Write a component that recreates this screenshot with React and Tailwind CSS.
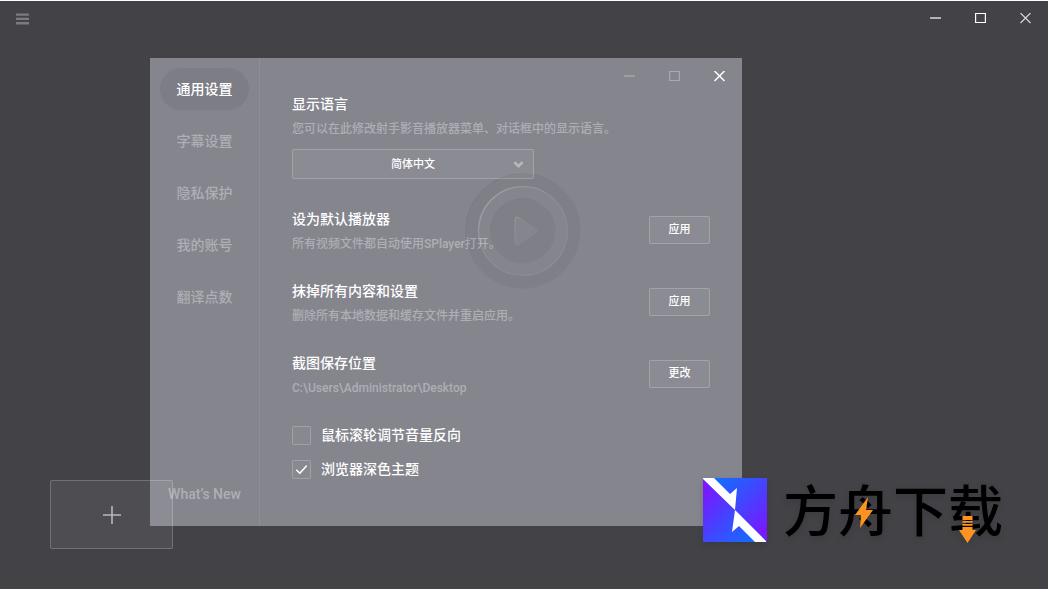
import React, { useState } from "react";

const tabs = ["通用设置", "字幕设置", "隐私保护", "我的账号", "翻译点数"];

const languages = ["简体中文", "繁體中文", "English", "日本語"];

const actions = [
  {
    title: "设为默认播放器",
    text: "所有视频文件都自动使用SPlayer打开。",
    button: "应用",
  },
  {
    title: "抹掉所有内容和设置",
    text: "删除所有本地数据和缓存文件并重启应用。",
    button: "应用",
  },
  {
    title: "截图保存位置",
    text: "C:\\Users\\Administrator\\Desktop",
    button: "更改",
  },
];

const WindowControls = ({ dimmed }) => (
  <div className="flex h-full">
    <button
      aria-label="Minimize"
      className={`flex w-[45px] items-center justify-center ${
        dimmed ? "text-white/20" : "text-white/60"
      }`}
    >
      <svg width="11" height="11" viewBox="0 0 11 11">
        <path d="M0 4h11v2H0z" fill="currentColor" />
      </svg>
    </button>
    <button
      aria-label="Maximize"
      className={`flex w-[45px] items-center justify-center ${
        dimmed ? "text-white/30" : "text-white"
      }`}
    >
      <svg width="11" height="11" viewBox="0 0 11 11">
        <path
          d="M.6.5h9.8v9H.6z"
          fill="none"
          stroke="currentColor"
          strokeWidth="1.2"
        />
      </svg>
    </button>
    <button
      aria-label="Close"
      className={`flex w-[45px] items-center justify-center ${
        dimmed ? "text-white" : "text-white/80"
      }`}
    >
      <svg width="11" height="11" viewBox="0 0 11 11">
        <path
          d="M.5 0l10 10M10.5 0l-10 10"
          stroke="currentColor"
          strokeWidth={dimmed ? 1.5 : 1.1}
        />
      </svg>
    </button>
  </div>
);

const CheckOption = ({ label, checked, onChange }) => (
  <label className="flex items-center gap-2.5 text-sm leading-5 font-medium text-white">
    <span className="relative flex">
      <input
        type="checkbox"
        checked={checked}
        onChange={onChange}
        className="size-[19px] appearance-none rounded-xs border border-white/20 bg-white/3"
      />
      {checked && (
        <svg
          className="pointer-events-none absolute inset-0"
          width="19"
          height="19"
          viewBox="0 0 19 19"
        >
          <path
            d="M4.8 10.2l3 3 6.4-7"
            fill="none"
            stroke="#fff"
            strokeWidth="1.6"
            strokeLinecap="round"
            strokeLinejoin="round"
          />
        </svg>
      )}
    </span>
    {label}
  </label>
);

const Preferences = () => {
  const [activeTab, setActiveTab] = useState(tabs[0]);
  const [language, setLanguage] = useState(languages[0]);
  const [reverseWheel, setReverseWheel] = useState(false);
  const [darkTheme, setDarkTheme] = useState(true);

  return (
    <section className="absolute top-[57px] left-[150px] flex w-[592px] bg-[#85858e]">
      {/* Tabs */}
      <nav className="flex w-[110px] flex-col gap-2.5 border-r border-white/8 p-2.5">
        {tabs.map((tab) => (
          <button
            key={tab}
            onClick={() => setActiveTab(tab)}
            className={`h-[42px] rounded-full text-sm font-medium ${
              activeTab === tab
                ? "bg-[#7d7d85] text-white"
                : "text-white/35"
            }`}
          >
            {tab}
          </button>
        ))}
        <a
          href="#whats-new"
          className="mt-auto py-3 text-center text-sm leading-5 font-medium text-white/35"
        >
          What’s New
        </a>
      </nav>

      <div className="flex-1">
        <div className="flex h-9 justify-end">
          <WindowControls dimmed />
        </div>

        <div className="px-8 pb-[47px]">
          {/* Display language */}
          <label
            htmlFor="language"
            className="block text-sm leading-5 font-medium text-white"
          >
            显示语言
          </label>
          <p className="mt-[5px] text-xs leading-5 font-medium text-white/35">
            您可以在此修改射手影音播放器菜单、对话框中的显示语言。
          </p>
          <div className="relative mt-2.5 w-[242px]">
            <select
              id="language"
              value={language}
              onChange={(e) => setLanguage(e.target.value)}
              className="block h-[30px] w-full appearance-none rounded-xs border border-white/20 bg-white/5 pt-0.5 text-center text-[11px] font-medium text-white"
            >
              {languages.map((name) => (
                <option key={name}>{name}</option>
              ))}
            </select>
            <svg
              className="pointer-events-none absolute top-3 right-2.5"
              width="11"
              height="7"
              viewBox="0 0 11 7"
            >
              <path
                d="M1.4 1.2l4.1 4 4.1-4"
                fill="none"
                stroke="#fff"
                strokeOpacity=".4"
                strokeWidth="2.4"
              />
            </svg>
          </div>

          {/* Actions */}
          <div className="mt-[30px] flex flex-col gap-[27px]">
            {actions.map((item) => (
              <div
                key={item.title}
                className="flex items-start justify-between"
              >
                <div>
                  <h2 className="text-sm leading-5 font-medium text-white">
                    {item.title}
                  </h2>
                  <p className="mt-[5px] text-xs leading-5 font-medium text-white/35">
                    {item.text}
                  </p>
                </div>
                <button className="mt-[7px] h-7 w-[61px] rounded-xs border border-white/20 bg-white/5 text-[11px] font-medium text-white">
                  {item.button}
                </button>
              </div>
            ))}
          </div>

          <div className="mt-[27px] flex flex-col gap-3.5">
            <CheckOption
              label="鼠标滚轮调节音量反向"
              checked={reverseWheel}
              onChange={() => setReverseWheel(!reverseWheel)}
            />
            <CheckOption
              label="浏览器深色主题"
              checked={darkTheme}
              onChange={() => setDarkTheme(!darkTheme)}
            />
          </div>
        </div>
      </div>
    </section>
  );
};

const PlayLogo = () => (
  <svg width="118" height="118" viewBox="0 0 118 118">
    <circle
      cx="59"
      cy="59"
      r="51"
      fill="none"
      stroke="#000"
      strokeOpacity=".045"
      strokeWidth="13"
    />
    <circle
      cx="59"
      cy="59"
      r="57.5"
      fill="none"
      stroke="url(#rim)"
    />
    <circle
      cx="59"
      cy="59"
      r="44.5"
      fill="none"
      stroke="url(#ring)"
      strokeWidth="1.2"
    />
    <circle
      cx="59"
      cy="59"
      r="32.5"
      fill="#000"
      fillOpacity=".045"
      stroke="url(#rim)"
    />
    <path
      d="M51 47.5c0-2.4 1.6-3 3.4-1.8l17.4 11.6c1.6 1 1.6 2.4 0 3.4L54.4 72.4c-1.8 1.2-3.4.5-3.4-1.8z"
      fill="#fff"
      fillOpacity=".05"
      stroke="url(#ring)"
      strokeOpacity=".6"
    />
    <defs>
      <linearGradient id="ring" x1="0" y1="0" x2="1" y2="1">
        <stop offset="0" stopColor="#fff" stopOpacity=".3" />
        <stop offset=".5" stopColor="#fff" stopOpacity=".07" />
        <stop offset="1" stopColor="#fff" stopOpacity=".07" />
      </linearGradient>
      <linearGradient id="rim" x1="0" y1="0" x2="1" y2="1">
        <stop offset="0" stopColor="#000" stopOpacity=".07" />
        <stop offset=".5" stopColor="#000" stopOpacity="0" />
        <stop offset="1" stopColor="#fff" stopOpacity=".1" />
      </linearGradient>
    </defs>
  </svg>
);

const Brand = () => (
  <div className="absolute right-[45px] bottom-[47px] flex items-center gap-4">
    <svg
      className="drop-shadow-md"
      width="64"
      height="64"
      viewBox="0 0 64 64"
    >
      <defs>
        <linearGradient id="upper" x1="0.2" y1="0" x2="1" y2="0.8">
          <stop offset="0" stopColor="#126fff" />
          <stop offset=".5" stopColor="#4245ff" />
          <stop offset="1" stopColor="#7a18ff" />
        </linearGradient>
        <linearGradient id="lower" x1="0" y1="0.2" x2="0.8" y2="1">
          <stop offset="0" stopColor="#7a18ff" />
          <stop offset=".5" stopColor="#4245ff" />
          <stop offset="1" stopColor="#126fff" />
        </linearGradient>
      </defs>
      <path d="M0 0h64v64z" fill="url(#upper)" />
      <path d="M0 0v64h64z" fill="url(#lower)" />
      <path d="M0 0h11l16 16 7-6-2 22L0 1z" fill="#fff" />
      <path d="M32 32l31 31v1H52L36 48l-7 6z" fill="#fff" />
    </svg>
    <div className="relative flex pt-1 text-[55px] leading-[60px] font-medium text-black drop-shadow-md">
      方舟下载
      <svg
        className="absolute top-[19px] left-[72px]"
        width="18"
        height="31"
        viewBox="0 0 18 31"
      >
        <path d="M13 0L0 18h6L5 31l13-18h-7z" fill="#ff9320" />
      </svg>
      <svg
        className="absolute top-[38px] left-[176px]"
        width="17"
        height="27"
        viewBox="0 0 17 27"
      >
        <path
          d="M3.5 0h10v4h-10zM3.5 5h10v1.8h-10zM3.5 8h10v1.8h-10zM3.5 11h10v3H17L8.5 27 0 14h3.5z"
          fill="#ff9320"
        />
      </svg>
    </div>
  </div>
);

const App = () => {
  return (
    <div className="relative flex min-h-screen flex-col border-t border-white bg-[#434247] font-['Roboto','Noto_Sans_CJK_SC',sans-serif]">
      <Preferences />

      <header className="flex h-[35px] items-center justify-between">
        <button aria-label="Menu" className="ml-4 text-white/30">
          <svg width="13" height="12" viewBox="0 0 13 12">
            <path
              d="M0 .5h13v2.3H0zM0 4.8h13v2.3H0zM0 9.1h13v2.3H0z"
              fill="currentColor"
            />
          </svg>
        </button>
        <WindowControls />
      </header>

      <main className="pointer-events-none relative flex flex-1 items-start justify-center pt-[136px] pr-0.5">
        <PlayLogo />
      </main>

      <footer className="relative pb-10 pl-[50px]">
        <button
          aria-label="Open file"
          className="flex h-[69px] w-[123px] items-center justify-center rounded-xs border border-white/20 bg-white/6"
        >
          <svg width="18" height="18" viewBox="0 0 18 18">
            <path
              d="M9 0v18M0 9h18"
              stroke="#fff"
              strokeOpacity=".6"
              strokeWidth="1.6"
            />
          </svg>
        </button>
      </footer>

      <Brand />
    </div>
  );
};

export default App;
